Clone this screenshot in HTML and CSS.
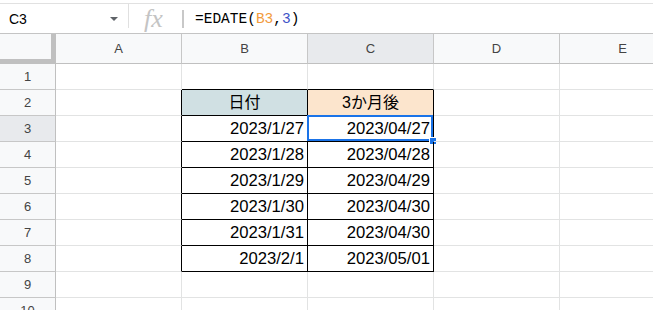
FILE: index.html
```html
<!DOCTYPE html>
<html lang="ja">
  <head>
    <meta charset="UTF-8" />
    <meta name="viewport" content="width=device-width, initial-scale=1.0" />
    <title>EDATE</title>
    <link rel="stylesheet" href="styles.css">
  </head>
  <body>
    <div class="formula-bar">
      <div class="name-box">
        <span>C3</span>
        <span class="caret"></span>
      </div>
      <div class="sep"></div>
      <div class="fx">fx</div>
      <div class="sep short"></div>
      <div class="formula">=EDATE(<span class="ref">B3</span>,<span class="num">3</span>)</div>
    </div>

    <div class="sheet">
      <!-- column headers -->
      <div class="corner"></div>
      <div class="hd">A</div>
      <div class="hd">B</div>
      <div class="hd active">C</div>
      <div class="hd">D</div>
      <div class="hd">E</div>

      <!-- row 1 -->
      <div class="rh">1</div>
      <div class="cell"></div>
      <div class="cell edge-b"></div>
      <div class="cell edge-b"></div>
      <div class="cell"></div>
      <div class="cell"></div>

      <!-- row 2 -->
      <div class="rh">2</div>
      <div class="cell edge-r"></div>
      <div class="cell box head-date">日付</div>
      <div class="cell box head-after">3か月後</div>
      <div class="cell"></div>
      <div class="cell"></div>

      <!-- row 3 -->
      <div class="rh active">3</div>
      <div class="cell edge-r"></div>
      <div class="cell box val">2023/1/27</div>
      <div class="cell box val selected">2023/04/27<span class="sel"><span class="handle"></span></span></div>
      <div class="cell"></div>
      <div class="cell"></div>

      <!-- row 4 -->
      <div class="rh">4</div>
      <div class="cell edge-r"></div>
      <div class="cell box val">2023/1/28</div>
      <div class="cell box val">2023/04/28</div>
      <div class="cell"></div>
      <div class="cell"></div>

      <!-- row 5 -->
      <div class="rh">5</div>
      <div class="cell edge-r"></div>
      <div class="cell box val">2023/1/29</div>
      <div class="cell box val">2023/04/29</div>
      <div class="cell"></div>
      <div class="cell"></div>

      <!-- row 6 -->
      <div class="rh">6</div>
      <div class="cell edge-r"></div>
      <div class="cell box val">2023/1/30</div>
      <div class="cell box val">2023/04/30</div>
      <div class="cell"></div>
      <div class="cell"></div>

      <!-- row 7 -->
      <div class="rh">7</div>
      <div class="cell edge-r"></div>
      <div class="cell box val">2023/1/31</div>
      <div class="cell box val">2023/04/30</div>
      <div class="cell"></div>
      <div class="cell"></div>

      <!-- row 8 -->
      <div class="rh">8</div>
      <div class="cell edge-r"></div>
      <div class="cell box val">2023/2/1</div>
      <div class="cell box val">2023/05/01</div>
      <div class="cell"></div>
      <div class="cell"></div>

      <!-- row 9 -->
      <div class="rh">9</div>
      <div class="cell"></div>
      <div class="cell"></div>
      <div class="cell"></div>
      <div class="cell"></div>
      <div class="cell"></div>

      <!-- row 10 -->
      <div class="rh">10</div>
      <div class="cell"></div>
      <div class="cell"></div>
      <div class="cell"></div>
      <div class="cell"></div>
      <div class="cell"></div>
    </div>
  </body>
</html>
```

FILE: styles.css
```css
* {
  box-sizing: border-box;
}

body {
  margin: 0;
  width: 653px;
  height: 310px;
  overflow: hidden;
  background: #fff;
  font-family: "Liberation Sans", Arial, "Noto Sans CJK JP", sans-serif;
}

.formula-bar {
  display: flex;
  align-items: center;
  margin-top: 3px;
  height: 31px;
  border-top: 1px solid #e1e1e1;
  border-bottom: 1px solid #c4c4c4;
}

.name-box {
  display: flex;
  align-items: center;
  width: 128px;
  padding-left: 9px;
  font-size: 14px;
  color: #000;
}

.caret {
  margin-left: auto;
  margin-right: 10px;
  border-left: 4px solid transparent;
  border-right: 4px solid transparent;
  border-top: 4px solid #5f6368;
}

.sep {
  width: 1px;
  height: 24px;
  margin-top: -5px;
  background: #e0e0e0;
}

.sep.short {
  width: 2px;
  height: 18px;
  margin-top: 0;
  background: #c8c8c8;
}

.fx {
  width: 53px;
  text-align: center;
  font-family: "Liberation Serif", "Times New Roman", serif;
  font-style: italic;
  font-size: 26px;
  color: #c4c4c4;
  line-height: 1;
  padding-right: 4px;
}

.formula {
  padding-left: 11px;
  font-family: "Liberation Mono", "DejaVu Sans Mono", monospace;
  font-size: 14.5px;
  color: #000;
}

.formula .ref {
  color: #f29b3c;
}

.formula .num {
  color: #3d52c7;
}

.sheet {
  display: grid;
  grid-template-columns: 56px repeat(5, 126px);
  grid-template-rows: 30px repeat(10, 26px);
}

.corner {
  background: #f8f9fa;
  border-right: 5px solid #c0c0c0;
  border-bottom: 5px solid #c0c0c0;
}

.hd {
  display: flex;
  align-items: center;
  justify-content: center;
  background: #f8f9fa;
  border-right: 1px solid #c7c7c7;
  border-bottom: 1px solid #c0c0c0;
  font-size: 13px;
  color: #444;
}

.rh {
  display: flex;
  align-items: center;
  justify-content: center;
  background: #f8f9fa;
  border-right: 1px solid #c0c0c0;
  border-bottom: 1px solid #c7c7c7;
  font-size: 13px;
  color: #444;
}

.hd.active,
.rh.active {
  background: #e8eaed;
}

.cell {
  position: relative;
  display: flex;
  align-items: flex-end;
  padding: 0 3px 2px;
  border-right: 1px solid #e2e3e3;
  border-bottom: 1px solid #e2e3e3;
  font-size: 16.67px;
  line-height: 20px;
  color: #000;
  white-space: nowrap;
}

.cell.edge-r {
  border-right-color: #000;
}

.cell.edge-b {
  border-bottom-color: #000;
}

.cell.box {
  border-right-color: #000;
  border-bottom-color: #000;
}

.cell.val {
  justify-content: flex-end;
}

.head-date,
.head-after {
  justify-content: center;
  font-family: "Liberation Sans", "Noto Sans CJK JP", sans-serif;
  font-size: 16px;
}

.head-date {
  background: #d0e0e3;
}

.head-after {
  background: #fce5cd;
}

.sel {
  position: absolute;
  left: -1px;
  top: -1px;
  width: 126px;
  height: 26px;
  border: 2px solid #1a73e8;
}

.handle {
  position: absolute;
  right: -6px;
  bottom: -6px;
  width: 8px;
  height: 8px;
  background: #1a73e8;
  border: 1px solid #fff;
}
```
